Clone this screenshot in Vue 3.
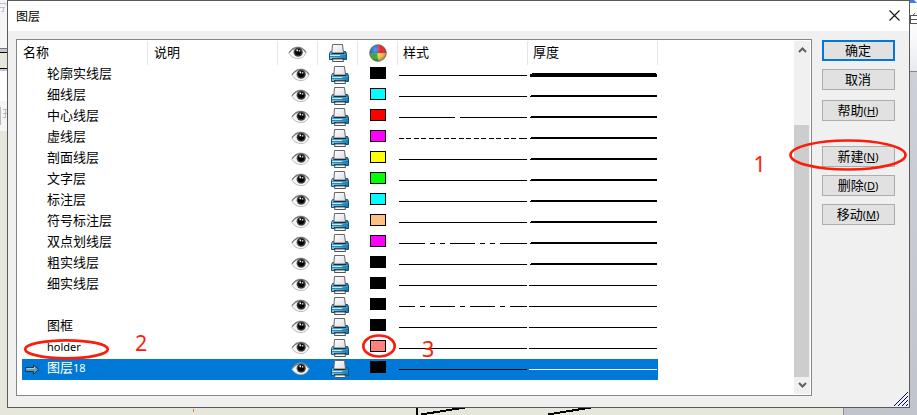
<script setup>
const columns = [
  { text: '名称' },
  { text: '说明' },
  { icon: 'eye' },
  { icon: 'printer' },
  { icon: 'palette' },
  { text: '样式' },
  { text: '厚度' },
]

const solid = 'M0 .5H128'
const center = 'M0 .5H56M61 .5H128'
const hidden =
  Array.from({ length: 8 }, (_, i) => `M${i * 15} .5h5m2 0h5`).join('') + 'M120 .5h8'
const doubleDot = 'M0 .5H26M31 .5h5m5 0h5m5 0h25m5 0h5m5 0h5m5 0h27'
const dashDot = 'M0 .5H16M21 .5h5m5 0h25m5 0h5m5 0h25m5 0h5m5 0h17'

const layers = [
  { name: '轮廓实线层', color: '#000000', style: solid, weight: 4 },
  { name: '细线层', color: '#00ffff', style: solid, weight: 2 },
  { name: '中心线层', color: '#ff0000', style: center, weight: 2 },
  { name: '虚线层', color: '#ff00ff', style: hidden, weight: 2 },
  { name: '剖面线层', color: '#ffff00', style: solid, weight: 2 },
  { name: '文字层', color: '#00ff00', style: solid, weight: 2 },
  { name: '标注层', color: '#00ffff', style: solid, weight: 2 },
  { name: '符号标注层', color: '#ffc080', style: solid, weight: 2 },
  { name: '双点划线层', color: '#ff00ff', style: doubleDot, weight: 2 },
  { name: '粗实线层', color: '#000000', style: solid, weight: 2 },
  { name: '细实线层', color: '#000000', style: solid, weight: 1 },
  { name: '', color: '#000000', style: dashDot, weight: 1 },
  { name: '图框', color: '#000000', style: solid, weight: 1 },
  { name: '', latin: 'holder', color: '#ff8080', style: solid, weight: 1 },
  { name: '图层', latin: '18', color: '#000000', style: solid, weight: 1, selected: true },
]

const weights = {
  4: 'M3 8h124v1h1v3H1V9h2z',
  2: 'M2 9h126v2H1v-1h1z',
  1: 'M0 10h128v1H0z',
}

const buttonGroups = [
  [{ text: '确定', primary: true }, { text: '取消' }],
  [{ text: '帮助', key: 'H' }],
  [{ text: '新建', key: 'N' }, { text: '删除', key: 'D' }, { text: '移动', key: 'M' }],
]
</script>

<template>
  <div class="screen">
    <svg class="defs" width="0" height="0">
      <defs>
        <linearGradient id="blueBody" x1="0" x2="1" y1="0" y2="0">
          <stop offset="0" stop-color="#7cc8ea" />
          <stop offset=".5" stop-color="#4fabd8" />
          <stop offset="1" stop-color="#1173a8" />
        </linearGradient>
        <linearGradient id="sheet" x1="0" x2="1" y1="0" y2="1">
          <stop offset="0" stop-color="#ffffff" />
          <stop offset="1" stop-color="#dcdfe8" />
        </linearGradient>
        <radialGradient id="iris">
          <stop offset="0" stop-color="#000" />
          <stop offset=".5" stop-color="#111" />
          <stop offset="1" stop-color="#555" />
        </radialGradient>
        <radialGradient id="gloss" cx=".35" cy=".3" r=".7">
          <stop offset="0" stop-color="#fff" stop-opacity=".3" />
          <stop offset=".5" stop-color="#fff" stop-opacity="0" />
          <stop offset="1" stop-color="#000" stop-opacity=".3" />
        </radialGradient>
        <symbol id="eye" viewBox="0 0 18 14">
          <path d="M.3 7.200C3 2.500 6 1 9.500 1c3.600 0 6.200 2.200 8.200 5.600-1.900 4-4.600 6-8.200 6C6 12.600 3 11 .3 7.200z" fill="#f5f5f5" stroke="#a9a9a9" stroke-width=".8" />
          <path d="M.6 6.600C3.400 2.800 6.200 1.700 9.600 1.700c3.300 0 5.800 1.700 7.800 4.700" fill="none" stroke="#777" stroke-width="1.200" />
          <circle cx="9.700" cy="6.200" r="4.600" fill="url(#iris)" />
          <circle cx="9.700" cy="6.100" r="2.900" fill="#000" />
          <path d="M8 3.600h1.500v1.700H8zM10.300 4.200h1.500v1.300h-1.500z" fill="#fff" />
        </symbol>
        <symbol id="printer" viewBox="0 0 18 18">
          <path d="M1.500 7.500h15l1 2v6H.5v-6z" fill="url(#blueBody)" stroke="#0b5278" />
          <path d="M3.500.5h10l1 8.500H2.800z" fill="url(#sheet)" stroke="#666" />
          <path d="M2.500 9.500h12.500" stroke="#25292f" />
          <path d="M1 10.500h16" stroke="#3d9dcb" />
          <path d="M1 11.500h10" stroke="#c4ebfb" />
          <path d="M1 12.500h16" stroke="#2687b8" />
          <path d="M3 14.500h12" stroke="#063e5c" />
          <path d="M4 15h10l.5 2.500h-11z" fill="#f7f8fa" stroke="#555" />
        </symbol>
        <symbol id="palette" viewBox="0 0 18 18">
          <path d="M8.700 9L.7 9.800A8.300 8.300 0 0 1 9.300.7q.8 4 0 8.300z" fill="#2468d2" />
          <path d="M9.300.7A8.300 8.300 0 0 1 17.300 9q-4 1-8.600 0 .9-4 .6-8.300z" fill="#e7242b" />
          <path d="M17.300 9a8.300 8.300 0 0 1-7.600 8.300Q8 14 8.700 9q4.300 1 8.600 0z" fill="#f7ca45" />
          <path d="M9.700 17.300A8.300 8.300 0 0 1 .7 9.800Q4 8 8.700 9q-.7 4 1 8.300z" fill="#34a83c" />
          <circle cx="9" cy="9" r="8.300" fill="url(#gloss)" stroke="#6b6251" stroke-width=".8" />
        </symbol>
      </defs>
    </svg>

    <svg class="backdrop" width="917" height="415" viewBox="0 0 917 415">
      <defs>
        <linearGradient id="ribbon" x1="0" x2="0" y1="0" y2="1">
          <stop offset="0" stop-color="#fff" />
          <stop offset=".5" stop-color="#fafafc" />
          <stop offset="1" stop-color="#e8eaf0" />
        </linearGradient>
        <linearGradient id="canvasEdge" x1="0" x2="0" y1="0" y2="1">
          <stop offset="0" stop-color="#cdd0d6" />
          <stop offset="1" stop-color="#c1c4cb" />
        </linearGradient>
      </defs>
      <path d="M0 0h843v415H0z" fill="#e6e6da" />
      <path d="M0 0h7v48H0z" fill="#f5f5f8" />
      <path d="M0 3.500h6v2M0 7.500h5M3.500 7v4.500H1" stroke="#c0c0c8" fill="none" />
      <path d="M0 48h7v4H0zM0 69h7v2H0z" fill="#c3c7d0" />
      <path d="M0 48h7v1H0z" fill="#777" />
      <path d="M0 52h7v1H0zM0 68h7v1H0z" fill="#000" />
      <path d="M0 71h7v30H0z" fill="#fff" />
      <path d="M0 101h7v30H0z" fill="#f5f5f5" />
      <path d="M.5 107v18M3 109.500h4M3 113.500h4M5.500 110v8M3 117.500h3" stroke="#bbb" fill="none" />
      <path d="M843 71h74v344h-74z" fill="url(#canvasEdge)" />
      <path d="M843 71h1v344h-1z" fill="#8e9094" />
      <path d="M909 0h8v71h-8z" fill="url(#ribbon)" />
      <path d="M909 71h8v1h-8z" fill="#85888e" />
      <path d="M910 0h4l3 3H910z" fill="#3c7ded" />
      <path d="M915 13l-2 2.500M910.500 15v9M910 15.500h7M911 19.500h6M911 23.500h6" stroke="#555" fill="none" />
      <path d="M416 408h2v7h-2z" fill="#000" />
      <path d="M421 414.500L468 407M548 414.500L594 407" stroke="#000" stroke-width="2" shape-rendering="crispEdges" />
      <path d="M193 409h1v3h-1z" fill="#e87a20" />
    </svg>

    <section class="dialog">
      <header class="titlebar">
        <span>图层</span>
        <svg class="close" width="11" height="11" viewBox="0 0 11 11">
          <path d="M.5.5l10 10M10.500.5l-10 10" stroke="#111" stroke-width="1.100" />
        </svg>
      </header>
      <div class="content">
        <div class="list">
          <div class="table">
            <div class="row head">
              <div v-for="(column, i) in columns" :key="i" class="th" :class="{ pictured: column.icon }">
                <span v-if="column.text">{{ column.text }}</span>
                <svg v-else :class="column.icon"><use :href="'#' + column.icon" /></svg>
              </div>
            </div>
            <div v-for="(layer, i) in layers" :key="i" class="row" :class="{ selected: layer.selected }">
              <div class="name">
                <div class="marker">
                  <svg v-if="layer.selected" width="15" height="11" viewBox="0 0 15 11">
                    <path d="M.6 3.500h7.900V.8l5.300 4.700-5.300 4.700V7.500H.6z" fill="#5b9cb2" stroke="#20343f" />
                    <path d="M1.500 4.600h8V3" stroke="#a6d4df" fill="none" />
                  </svg>
                </div>
                <span>{{ layer.name }}<span v-if="layer.latin" class="latin">{{ layer.latin }}</span></span>
              </div>
              <div></div>
              <div class="cell"><svg class="eye"><use href="#eye" /></svg></div>
              <div class="cell"><svg class="printer"><use href="#printer" /></svg></div>
              <div class="cell"><i class="swatch" :style="{ background: layer.color }"></i></div>
              <div class="line"><svg width="128" height="1"><path :d="layer.style" stroke="#000" /></svg></div>
              <div class="thickness">
                <svg width="128" height="21"><path :d="weights[layer.weight]" fill="currentColor" shape-rendering="crispEdges" /></svg>
              </div>
            </div>
          </div>
          <div class="scrollbar">
            <svg width="9" height="6" viewBox="0 0 9 6"><path d="M1 5l3.500-3.500L8 5" fill="none" stroke="#606060" stroke-width="2" /></svg>
            <div class="thumb"></div>
            <svg width="9" height="6" viewBox="0 0 9 6"><path d="M1 1l3.500 3.500L8 1" fill="none" stroke="#606060" stroke-width="2" /></svg>
          </div>
        </div>
        <aside class="actions">
          <div v-for="(group, g) in buttonGroups" :key="g" class="group">
            <button v-for="b in group" :key="b.text" :class="{ primary: b.primary }">
              {{ b.text }}<span v-if="b.key" class="key">(<u>{{ b.key }}</u>)</span>
            </button>
          </div>
        </aside>
      </div>
      <svg class="grip" width="14" height="14" viewBox="0 0 14 14">
        <path d="M0 14L14 0M4 14L14 4M8 14l6-6M12 14l2-2" stroke="#000080" />
      </svg>
    </section>

    <svg class="notes" width="917" height="415" viewBox="0 0 917 415">
      <g fill="none" stroke="#fb1d0c" stroke-width="2.700">
        <ellipse cx="848" cy="155" rx="57.500" ry="14.500" />
        <ellipse cx="66.500" cy="349.300" rx="41.300" ry="9" />
        <ellipse cx="379" cy="346" rx="15.700" ry="10.500" />
      </g>
      <text x="753.500" y="172">1</text>
      <text x="135" y="351">2</text>
      <text x="422" y="357">3</text>
    </svg>
  </div>
</template>

<style>
body {
  margin: 0;
  overflow: hidden;
}
</style>

<style scoped>
.screen {
  position: relative;
  width: 917px;
  height: 415px;
  overflow: hidden;
  font: 13px/21px "Noto Sans CJK SC", sans-serif;
  color: #000;
}
svg {
  display: block;
}
.defs,
.backdrop,
.notes {
  position: absolute;
  top: 0;
  left: 0;
}
.dialog {
  position: absolute;
  top: 0;
  left: 7px;
  box-sizing: border-box;
  width: 903px;
  height: 408px;
  border: 1px solid #5a5a5c;
  background: #f0f0f0;
}
.titlebar {
  display: flex;
  align-items: center;
  justify-content: space-between;
  height: 30px;
  padding: 0 9px 0 8px;
  background: #fff;
  font-size: 12px;
}
.titlebar span {
  padding-bottom: 2px;
}
.close {
  margin-bottom: 2px;
}
.content {
  display: flex;
  gap: 10px;
  padding: 8px 14px 0 8px;
}
.list {
  display: flex;
  justify-content: space-between;
  box-sizing: border-box;
  width: 796px;
  height: 357px;
  padding: 0 1px 0 5px;
  border: 1px solid #828790;
  background: #fff;
}
.row {
  display: grid;
  grid-template-columns: 126px 130px 40px 40px 40px 130px 130px;
  height: 21px;
}
.head {
  height: 25px;
}
.th {
  box-sizing: border-box;
  height: 24px;
  margin-top: 1px;
  padding: 0 0 0 5px;
  border-right: 1px solid #e5e5e5;
  line-height: 21px;
}
.th:first-child {
  padding-left: 1px;
}
.th:nth-child(2) {
  padding-left: 6px;
}
.th.pictured {
  display: flex;
  justify-content: center;
  align-items: center;
  padding: 0;
}
.name {
  display: flex;
  line-height: 15px;
  white-space: nowrap;
}
.marker {
  width: 25px;
  padding: 5px 0 0 3px;
  box-sizing: border-box;
}
.latin {
  font-family: "Noto Sans", sans-serif;
  font-size: 11px;
}
.cell {
  padding: 1px 0 0 13px;
}
.eye {
  width: 19px;
  height: 14px;
}
.cell .eye {
  margin-top: 2px;
}
.printer,
.palette {
  width: 18px;
  height: 18px;
}
.swatch {
  display: block;
  box-sizing: border-box;
  width: 16px;
  height: 12px;
  margin: 1px 0 0 -1px;
  border: 1px solid #000;
}
.line {
  padding: 10px 0 0 1px;
}
.thickness {
  padding-left: 1px;
}
.selected {
  background: #0078d7;
  color: #fff;
}
.scrollbar {
  display: flex;
  flex-direction: column;
  justify-content: space-between;
  align-items: center;
  box-sizing: border-box;
  width: 16px;
  height: 353px;
  margin-top: 1px;
  padding: 6px 0;
  background: #f0f0f0;
}
.thumb {
  width: 15px;
  height: 252px;
  margin: 66px 1px 0 0;
  background: #cdcdcd;
}
.actions {
  display: flex;
  flex-direction: column;
  width: 73px;
  padding-top: 1px;
}
.group {
  display: flex;
  flex-direction: column;
  gap: 8px;
  margin-bottom: 10px;
}
.group:nth-child(2) {
  margin-bottom: 25px;
}
button {
  box-sizing: border-box;
  width: 73px;
  height: 21px;
  padding: 0 1px 2px 0;
  border: 1px solid #adadad;
  background: #e1e1e1;
  color: #000;
  font: 13px/17px "Noto Sans CJK SC", sans-serif;
  white-space: nowrap;
}
button.primary {
  border: 2px solid #0078d7;
  line-height: 15px;
}
.key {
  font-family: "Noto Sans", sans-serif;
  font-size: 11px;
}
.grip {
  position: absolute;
  right: 1px;
  bottom: 1px;
}
.notes text {
  fill: #fb1d0c;
  font: 21.500px "Noto Sans", sans-serif;
}
</style>
